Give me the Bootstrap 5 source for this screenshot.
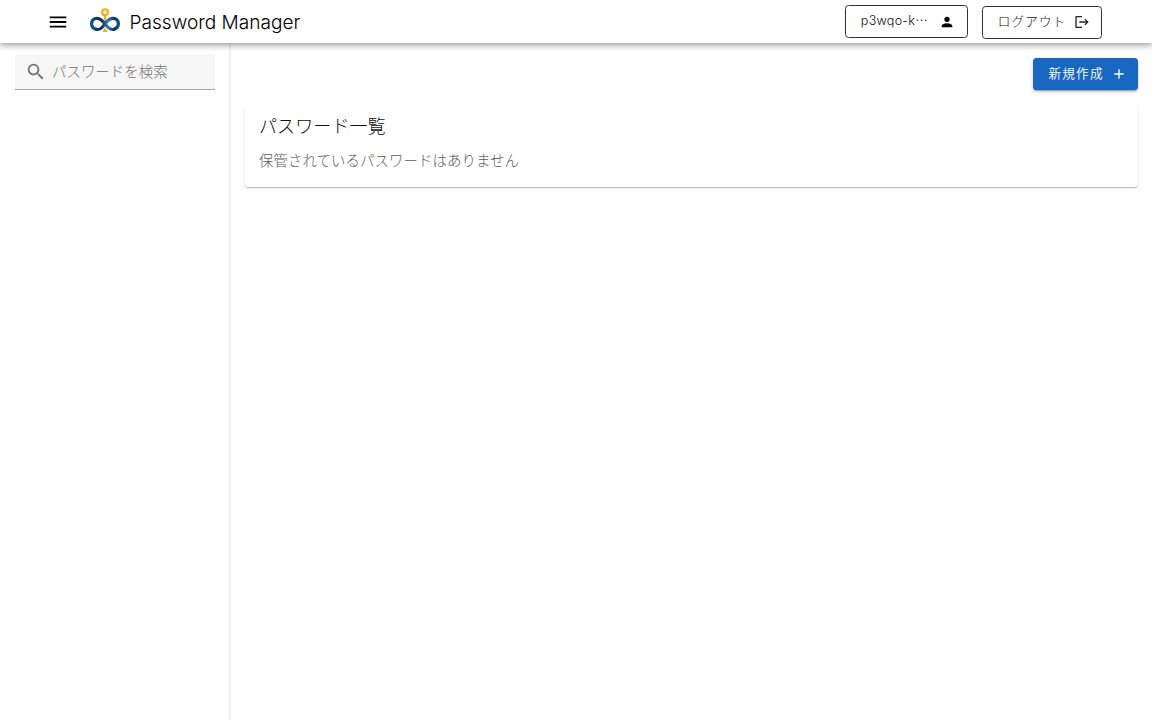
<!DOCTYPE html>
<html lang="ja">
<head>
<meta charset="utf-8">
<meta name="viewport" content="width=device-width, initial-scale=1">
<title>Password Manager</title>
<link href="https://cdn.jsdelivr.net/npm/bootstrap@5.3.0/dist/css/bootstrap.min.css" rel="stylesheet">
<style>
body{font-family:Inter,"Noto Sans CJK JP",sans-serif;font-weight:300;color:rgba(0,0,0,.87);font-size:14.4px;line-height:21.6px}
svg{display:block;flex:none}
.topbar{height:43.2px;padding:0 50.4px 0 46.5px;box-shadow:0 2px 4px -1px rgba(0,0,0,.2),0 4px 5px rgba(0,0,0,.14),0 1px 10px rgba(0,0,0,.12);z-index:2}
.brand-title{font-size:19.1px;line-height:28px;color:#000;margin-left:8.6px}
.brand-mark{margin-left:20.4px;margin-top:-3px}
.tool{height:33px;border:1px solid #333;border-radius:3.6px;background:#fff;font-size:12.6px;font-weight:300;line-height:18px;color:#111;padding:0 12px 0 15.2px}
.tool-user{width:123px;padding-right:11.5px;letter-spacing:.25px}
.tool-user svg{margin-top:1px}
.tool-out{width:120px;margin-left:14px;margin-top:1px;padding-right:11px;letter-spacing:1.1px}
.sidebar{width:231px;border-right:2px solid #eee;padding:10.8px 14.4px 10.8px 14.6px}
.search-box{height:36px;background:#f6f6f6;border-bottom:1px solid #a4a4a4;border-radius:3.6px 3.6px 0 0;padding-left:10.8px;color:#757575}
.search-box input{background:none;border:0;outline:0;font-weight:300;padding:0;margin-left:5px;width:150px;height:24px;color:#333;letter-spacing:.06px}
.search-box input::placeholder{color:#707070;opacity:1}
main{padding:14.4px 14.4px 0 13.6px}
.create{height:32.4px;width:104.6px;background:#1867c0;border-radius:3.6px;font-size:12.6px;font-weight:350;letter-spacing:1.2px;padding:0 11px 0 15.5px;box-shadow:0 3px 1px -2px rgba(0,0,0,.2),0 2px 2px rgba(0,0,0,.14),0 1px 5px rgba(0,0,0,.12)}
.panel{margin-top:14.6px;height:82.4px;border-radius:3.6px;padding:8px 14.4px;box-shadow:0 2px 1px -1px rgba(0,0,0,.14),0 1px 1px rgba(0,0,0,.1),0 1px 3px rgba(0,0,0,.1)}
.panel h1{font-size:18px;line-height:28.8px;font-weight:300;color:#111;letter-spacing:.1px}
.panel p{color:#5c5c5c;margin-top:9px;letter-spacing:.1px}
</style>
</head>
<body class="vh-100 d-flex flex-column overflow-hidden bg-white">
<header class="topbar d-flex align-items-center bg-white position-relative">
  <svg width="22" height="22" viewBox="0 0 24 24"><path d="M3 6h18v2H3V6m0 5h18v2H3v-2m0 5h18v2H3v-2Z"/></svg>
  <svg class="brand-mark" width="32" height="25" viewBox="0 0 32 25" fill="none">
    <defs><linearGradient id="loop" x1="0" x2="1"><stop stop-color="#10528a"/><stop offset=".35" stop-color="#0b2b4b"/><stop offset=".6" stop-color="#2b7fb8"/><stop offset=".85" stop-color="#0e345a"/><stop offset="1" stop-color="#165083"/></linearGradient></defs>
    <path d="M16 7v7" stroke="#f0ae20" stroke-width="2.4"/>
    <path d="M13.3 24 16 19.5 18.7 24Z" fill="#f0ae20"/>
    <circle cx="16" cy="4.2" r="2.9" stroke="#f0ae20" stroke-width="2.2"/>
    <path d="M12.800 12.400C9 8.600 2.600 10.200 2.600 15.800S9.400 23.200 13 19.500L19 12.400C22.800 8.600 29.400 10.200 29.400 15.800S22.800 23.200 19.200 19.500L12.800 12.400" stroke="url(#loop)" stroke-width="3.2"/>
  </svg>
  <span class="brand-title">Password Manager</span>
  <div class="d-flex align-items-start ms-auto">
    <button class="tool tool-user d-flex align-items-center justify-content-between"><span>p3wqo-k⋯</span><svg width="16" height="16" viewBox="0 0 24 24"><path d="M12 4a4 4 0 0 1 4 4 4 4 0 0 1-4 4 4 4 0 0 1-4-4 4 4 0 0 1 4-4m0 10c4.420 0 8 1.790 8 4v2H4v-2c0-2.210 3.580-4 8-4Z"/></svg></button>
    <button class="tool tool-out d-flex align-items-center justify-content-between"><span>ログアウト</span><svg width="16" height="16" viewBox="0 0 24 24" fill="#222"><path d="m17 7-1.410 1.410L18.170 11H8v2h10.170l-2.580 2.580L17 17l5-5-5-5M4 5h8V3H4c-1.100 0-2 .9-2 2v14c0 1.100.9 2 2 2h8v-2H4V5Z"/></svg></button>
  </div>
</header>
<div class="d-flex flex-grow-1">
  <aside class="sidebar flex-shrink-0">
    <div class="search-box d-flex align-items-center"><svg width="21.6" height="21.6" viewBox="0 0 24 24" fill="currentColor"><path d="M9.500 3A6.500 6.500 0 0 1 16 9.500c0 1.610-.59 3.090-1.560 4.230l.27.270h.79l5 5-1.500 1.500-5-5v-.79l-.27-.27A6.516 6.516 0 0 1 9.500 16 6.500 6.500 0 0 1 3 9.500 6.500 6.500 0 0 1 9.500 3m0 2C7 5 5 7 5 9.500S7 14 9.500 14 14 12 14 9.500 12 5 9.500 5Z"/></svg><input type="text" placeholder="パスワードを検索"></div>
  </aside>
  <main class="flex-grow-1">
    <div class="d-flex justify-content-end"><button class="create border-0 text-white d-flex align-items-center justify-content-between"><span>新規作成</span><svg width="16" height="16" viewBox="0 0 24 24" fill="#fff"><path d="M19 13h-6v6h-2v-6H5v-2h6V5h2v6h6v2Z"/></svg></button></div>
    <section class="panel bg-white"><h1 class="mb-0">パスワード一覧</h1><p class="mb-0">保管されているパスワードはありません</p></section>
  </main>
</div>
<script src="https://cdn.jsdelivr.net/npm/bootstrap@5.3.0/dist/js/bootstrap.bundle.min.js"></script>
</body>
</html>
